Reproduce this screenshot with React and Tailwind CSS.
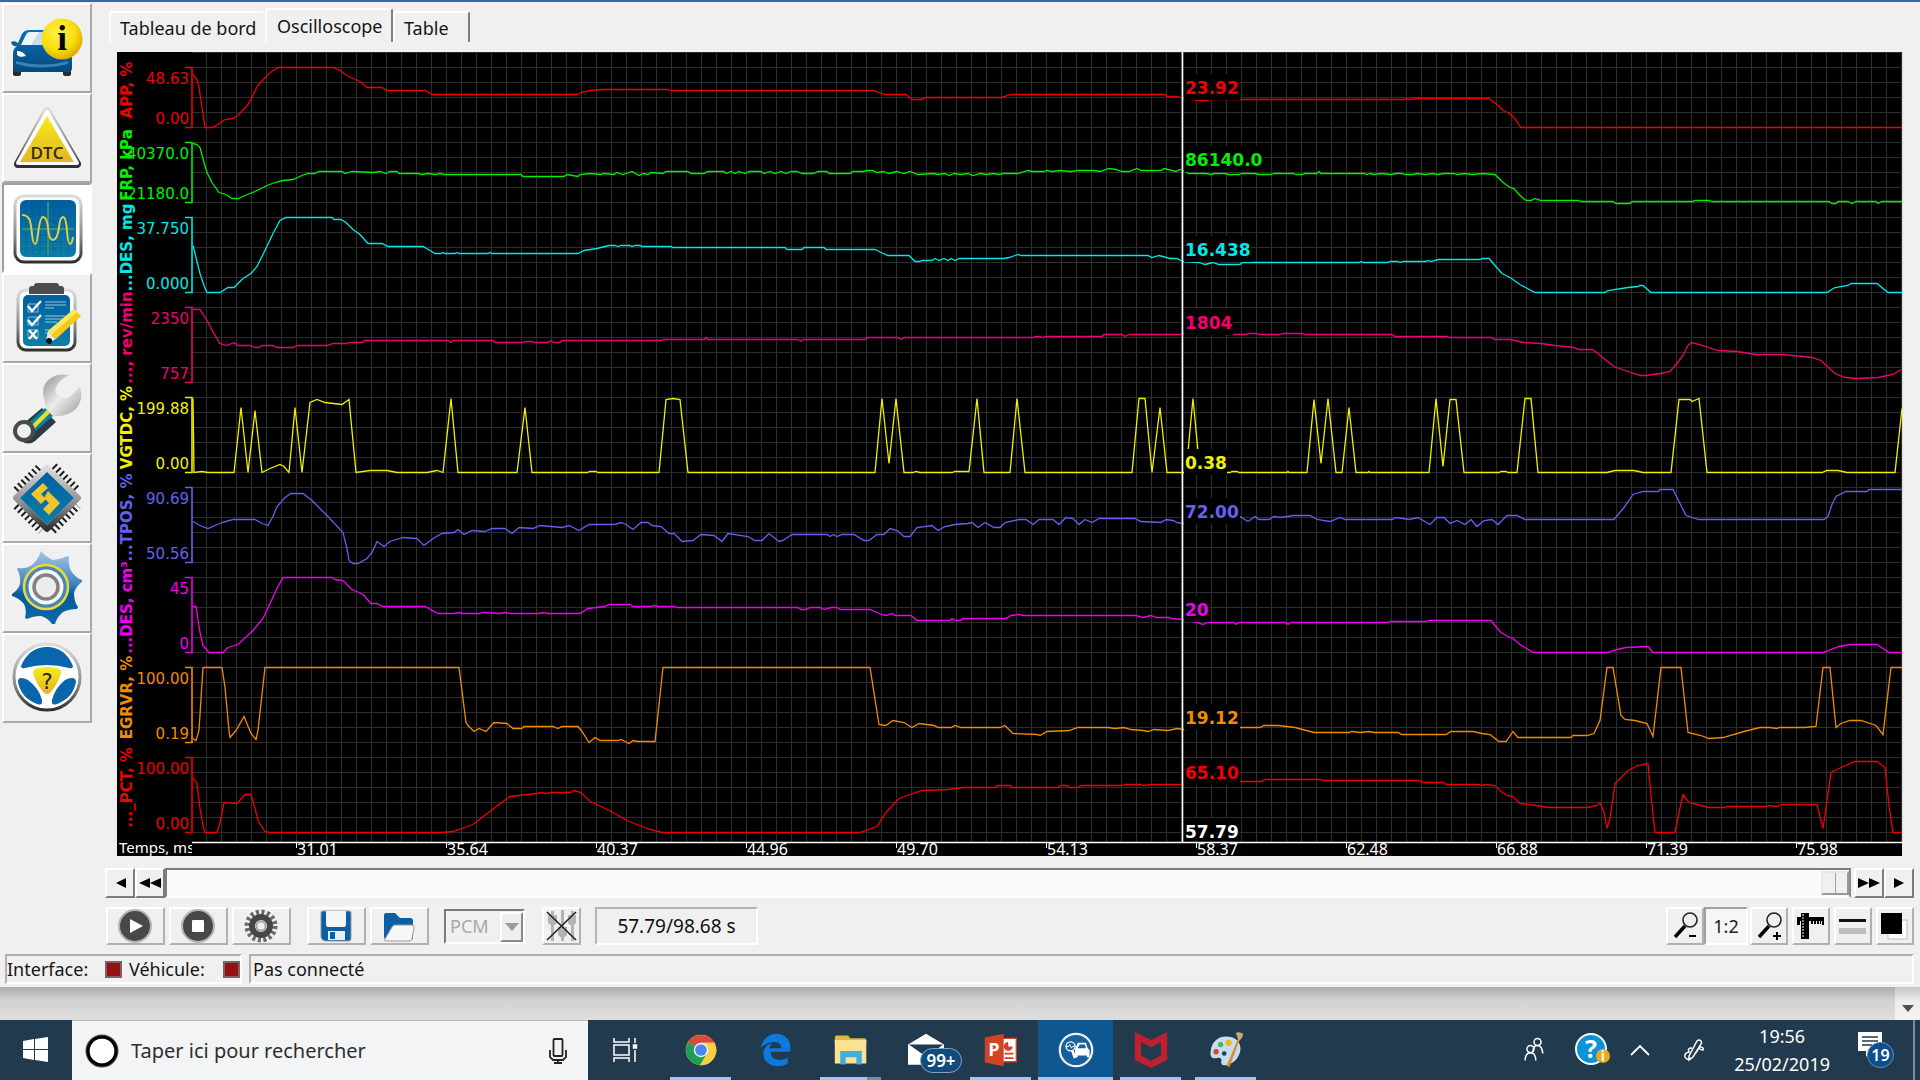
import React, { useState } from 'react';
import clsx from 'clsx';

const CHANNELS = [
  {
    name: 'APP, %', color: '#f00000', top: 67, bottom: 127, max: '48.63', min: '0.00', value: '23.92', valueY: 94, valueW: 56,
    points: '193,74 197,79 199,87 202,107 205,127 213,127 218,124 225,119 233,118 238,115 248,104 254,93 257,86 267,75 273,70 279,67 333,67 340,70 347,75 353,78 360,81 367,87 382,87 387,90 425,90 432,94 577,94 581,92 590,90 602,89 668,89 670,90 873,90 885,94 906,94 912,99 922,99 925,97 1001,97 1011,94 1165,94 1167,96 1177,96 1183,98 1201,100 1208,100 1210,99 1404,99 1406,98 1410,99 1416,98 1489,98 1497,104 1503,110 1508,112 1514,117 1521,127 1902,127',
  },
  {
    name: 'FRP, kPa', color: '#00f000', top: 142, bottom: 202, max: '40370.0', min: '21180.0', value: '86140.0', valueY: 166, valueW: 80,
    points: '193,143 197,144 200,147 204,162 207,172 212,182 219,192 226,194 232,198 238,198 245,195 255,191 267,185 275,182 283,180 293,179 302,175 308,173 315,173 319,171 342,171 345,173 352,171 373,172 380,171 386,173 390,171 397,171 399,173 418,173 422,174 428,173 436,174 440,173 444,174 521,174 523,176 564,176 567,174 578,176 580,174 590,173 601,174 603,173 614,174 617,172 623,174 632,171 639,175 643,173 648,174 651,172 663,173 666,171 688,171 691,173 704,173 708,171 724,171 726,173 731,171 735,173 739,171 745,173 749,171 761,171 764,173 770,171 775,173 781,171 786,173 791,171 797,171 802,173 813,173 818,171 827,171 829,173 850,173 853,171 863,171 867,170 872,170 878,172 883,171 889,173 897,171 904,173 910,171 918,174 934,173 938,174 945,173 949,175 954,173 961,174 968,173 973,175 980,173 987,174 993,173 999,174 1003,173 1018,173 1028,170 1032,171 1044,171 1047,170 1052,171 1060,170 1071,171 1077,170 1094,170 1100,171 1109,168 1116,169 1122,171 1129,171 1137,168 1141,170 1161,170 1164,168 1176,171 1180,169 1183,170 1189,173 1206,173 1211,174 1215,173 1225,173 1229,174 1239,174 1242,173 1255,173 1259,174 1271,174 1274,173 1293,173 1296,174 1302,174 1305,173 1317,173 1319,171 1321,173 1364,173 1367,174 1370,173 1374,174 1380,173 1391,174 1396,173 1402,173 1405,174 1413,174 1417,173 1425,174 1433,173 1437,174 1444,173 1454,173 1457,174 1465,173 1472,174 1482,173 1495,174 1503,182 1510,187 1514,188 1519,194 1526,200 1531,200 1535,198 1541,200 1579,200 1581,201 1613,201 1616,203 1630,203 1632,201 1693,201 1695,200 1709,200 1712,201 1829,201 1832,203 1836,203 1838,201 1848,201 1852,203 1856,201 1876,201 1878,203 1882,201 1902,201',
  },
  {
    name: '...DES, mg', color: '#00e8e8', top: 217, bottom: 292, max: '37.750', min: '0.000', value: '16.438', valueY: 256, valueW: 67,
    points: '193,245 200,273 204,285 207,292 220,292 228,287 234,287 243,278 251,273 257,266 264,252 273,233 280,220 286,217 332,217 334,219 341,219 346,222 353,229 360,234 368,243 382,243 388,246 423,246 430,250 435,253 441,253 443,252 445,253 455,253 457,252 459,253 488,253 490,252 492,253 578,253 584,250 597,248 609,245 615,245 618,246 621,245 630,245 632,246 635,245 640,245 642,246 671,246 673,247 785,247 787,249 802,249 804,247 824,247 826,249 875,249 881,252 888,255 909,255 915,261 920,261 922,260 932,260 935,258 939,260 944,258 948,260 951,258 955,260 959,258 1004,258 1009,257 1015,255 1018,254 1021,255 1148,255 1152,257 1159,255 1170,258 1177,258 1183,261 1199,262 1205,264 1213,262 1219,264 1240,264 1242,262 1359,262 1361,261 1363,262 1388,262 1390,261 1398,261 1400,262 1403,261 1426,261 1428,260 1431,261 1438,259 1480,259 1482,258 1489,258 1495,265 1502,273 1510,277 1520,284 1535,292 1605,292 1608,290 1628,287 1638,286 1640,285 1643,285 1651,292 1827,292 1835,287 1848,285 1851,283 1877,283 1888,292 1902,292',
  },
  {
    name: '..., rev/min', color: '#f00074', top: 307, bottom: 382, max: '2350', min: '757', value: '1804', valueY: 329, valueW: 49,
    points: '193,309 200,309 207,320 214,333 220,343 227,345 234,342 238,345 250,345 255,347 259,347 262,345 273,345 277,347 293,347 297,345 328,345 333,343 347,343 350,342 362,342 365,340 448,340 451,342 453,340 493,340 495,342 523,342 525,341 532,341 535,342 548,342 551,340 554,342 560,342 562,340 661,340 664,339 704,339 706,337 708,339 798,339 801,341 803,339 865,339 867,337 898,337 901,339 904,337 1033,337 1035,336 1040,336 1043,337 1046,336 1102,336 1104,334 1122,334 1125,336 1129,334 1180,334 1183,333 1233,334 1246,334 1248,333 1257,333 1259,334 1280,334 1283,333 1302,333 1305,334 1392,334 1395,336 1447,336 1449,337 1491,337 1495,339 1510,339 1524,342 1541,343 1555,345 1574,347 1579,349 1592,349 1598,353 1605,359 1614,366 1628,371 1640,375 1647,375 1652,374 1661,373 1670,371 1676,364 1683,355 1688,345 1692,342 1695,343 1706,346 1718,350 1737,351 1756,354 1784,354 1793,355 1812,357 1821,360 1835,373 1845,377 1857,378 1878,377 1893,374 1901,369',
  },
  {
    name: 'VGTDC, %', color: '#f0f000', top: 397, bottom: 472, max: '199.88', min: '0.00', value: '0.38', valueY: 469, valueW: 43,
    points: '193,398 194,472 202,471 208,472 234,472 241,407 248,472 255,410 262,472 270,468 280,464 284,466 289,472 295,407 302,472 310,402 317,399 325,402 342,404 349,399 356,472 370,470 387,470 397,472 427,472 437,470 443,472 451,398 458,472 517,472 525,407 532,472 587,472 590,471 596,471 598,472 659,472 666,399 673,398 680,399 688,472 875,472 882,398 889,463 896,398 904,472 913,472 916,471 920,472 952,472 955,471 969,471 977,398 984,472 1010,472 1017,398 1025,472 1132,472 1139,398 1145,398 1152,472 1160,407 1167,472 1186,472 1193,398 1200,472 1230,472 1232,471 1237,471 1239,472 1287,472 1288,471 1289,472 1307,472 1314,399 1321,463 1328,398 1336,472 1342,472 1349,407 1356,472 1368,472 1369,471 1370,472 1429,472 1436,398 1443,466 1450,399 1456,399 1464,472 1499,472 1501,471 1506,471 1508,472 1517,472 1525,398 1531,398 1538,472 1607,472 1615,470 1634,470 1643,472 1671,472 1679,399 1690,399 1692,401 1699,398 1707,472 1822,472 1827,470 1838,470 1847,472 1895,472 1902,408',
  },
  {
    name: '...TPOS, %', color: '#6262f0', top: 487, bottom: 562, max: '90.69', min: '50.56', value: '72.00', valueY: 518, valueW: 56,
    points: '193,521 200,525 208,528 222,522 233,519 255,519 262,523 268,525 273,516 277,506 285,497 291,493 303,493 312,500 328,516 343,532 347,548 349,560 353,563 358,563 367,558 372,552 377,541 384,546 390,541 403,537 417,538 424,545 433,538 442,533 454,532 458,529 464,534 472,530 485,531 492,528 505,528 512,533 519,527 533,528 540,525 562,527 569,525 579,530 589,524 614,524 621,522 626,524 633,529 641,522 648,522 652,525 661,526 669,533 674,533 682,541 693,540 701,534 714,535 722,541 728,533 748,536 755,540 762,540 769,533 779,541 783,540 792,534 827,534 830,536 833,534 837,536 842,534 854,534 864,540 869,540 877,534 884,534 890,528 897,530 904,536 910,536 917,527 932,525 938,530 945,526 955,524 968,523 972,522 978,527 985,522 994,527 1000,527 1005,522 1019,519 1026,519 1033,524 1039,519 1053,519 1059,524 1066,517 1073,518 1079,524 1085,519 1092,522 1099,518 1135,518 1141,521 1161,522 1166,519 1173,520 1177,522 1183,523 1240,516 1248,521 1255,516 1259,519 1269,519 1274,516 1281,517 1293,515 1310,515 1317,519 1330,521 1340,517 1345,519 1392,519 1396,517 1409,519 1418,517 1430,524 1437,517 1444,517 1450,523 1457,520 1465,524 1471,519 1477,526 1484,520 1492,519 1498,524 1507,515 1517,515 1525,519 1614,519 1624,507 1633,494 1643,491 1658,491 1660,489 1673,489 1680,503 1686,515 1699,519 1824,519 1828,516 1832,504 1836,496 1846,491 1867,491 1869,489 1902,489',
  },
  {
    name: '...DES, cm³', color: '#f000f0', top: 577, bottom: 652, max: '45', min: '0', value: '20', valueY: 616, valueW: 25,
    points: '193,606 196,606 200,632 203,645 209,652 223,652 228,647 238,644 253,630 263,618 271,601 277,588 283,577 332,577 335,579 343,580 352,589 363,594 371,603 377,603 383,606 425,606 438,613 454,613 459,612 463,613 480,613 483,612 500,613 505,612 511,613 539,613 544,612 547,613 580,613 588,608 605,606 609,604 630,604 633,606 651,606 654,605 658,606 674,606 677,607 798,607 801,609 806,609 810,607 820,607 824,609 831,607 837,607 840,609 870,609 881,614 886,615 892,613 895,615 911,615 917,620 950,620 952,618 956,620 961,620 963,618 1006,618 1011,615 1019,614 1023,615 1136,615 1143,617 1151,615 1156,617 1169,617 1172,618 1183,619 1197,622 1203,624 1208,622 1234,622 1236,624 1239,622 1286,622 1288,624 1291,622 1388,622 1390,621 1426,621 1429,620 1491,620 1495,625 1501,632 1508,636 1513,638 1520,644 1533,652 1607,652 1617,649 1626,647 1648,646 1653,652 1823,652 1839,646 1850,644 1877,644 1889,652 1902,652',
  },
  {
    name: 'EGRVR, %', color: '#f08c00', top: 667, bottom: 742, max: '100.00', min: '0.19', value: '19.12', valueY: 724, valueW: 56,
    points: '193,738 196,740 199,730 203,667 222,667 225,687 229,730 230,737 236,730 244,716 251,733 256,739 258,730 265,667 459,667 466,722 468,725 474,731 479,728 486,731 494,722 507,723 513,728 522,728 524,726 553,726 558,728 562,726 578,726 582,731 589,742 595,737 600,740 618,740 621,739 629,743 633,740 638,741 655,741 663,667 870,667 879,724 886,725 893,720 904,722 912,727 919,723 934,725 938,727 951,727 955,725 961,727 1000,727 1005,725 1013,733 1037,734 1040,735 1047,731 1069,730 1078,727 1108,727 1115,728 1124,727 1131,729 1143,730 1148,731 1154,729 1168,730 1177,728 1183,729 1240,727 1260,727 1264,725 1278,725 1295,727 1314,732 1349,732 1352,731 1360,732 1369,731 1374,732 1398,732 1402,734 1446,734 1451,731 1473,731 1482,733 1490,734 1499,741 1506,741 1513,731 1518,737 1571,737 1573,735 1587,735 1594,733 1600,720 1607,667 1613,667 1621,715 1625,719 1635,720 1647,723 1653,736 1661,667 1681,667 1688,732 1701,735 1709,738 1723,737 1744,731 1760,727 1770,727 1777,728 1779,727 1805,727 1816,726 1823,667 1830,667 1836,727 1841,723 1850,720 1861,720 1876,725 1883,734 1891,667 1902,667',
  },
  {
    name: '..._PCT, %', color: '#f00000', top: 757, bottom: 832, max: '100.00', min: '0.00', value: '65.10', valueY: 779, valueW: 56,
    points: '193,777 197,783 200,808 203,825 205,832 217,832 220,822 224,802 237,803 245,794 251,794 255,808 258,820 265,831 269,832 441,832 453,831 473,824 491,810 510,796 537,793 541,792 546,793 553,792 571,792 574,790 581,792 589,800 613,812 627,820 647,828 662,832 860,832 877,826 886,812 899,798 922,790 948,789 964,787 996,787 998,785 1010,785 1012,787 1058,787 1061,785 1067,785 1070,787 1078,787 1081,785 1122,785 1125,784 1141,784 1143,785 1152,784 1183,784 1240,781 1262,781 1265,779 1321,779 1323,780 1420,780 1422,782 1443,782 1447,784 1478,784 1482,785 1486,784 1495,785 1501,791 1507,795 1513,796 1520,803 1536,805 1548,807 1588,807 1597,805 1600,802 1604,812 1607,828 1610,818 1615,783 1628,770 1638,765 1648,763 1651,795 1655,832 1675,832 1679,812 1683,794 1689,802 1701,805 1709,807 1725,807 1727,806 1766,806 1769,805 1777,806 1782,804 1817,804 1823,828 1831,772 1841,767 1855,761 1877,761 1885,767 1889,805 1893,832 1902,832',
  },
];

const TIME_TICKS = ['31.01', '35.64', '40.37', '44.96', '49.70', '54.13', '58.37', '62.48', '66.88', '71.39', '75.98'];

const range = (n) => [...Array(n).keys()];

const Scope = () => (
  <svg viewBox="117 52 1785 804" className="block w-full h-auto bg-black overflow-visible" role="img" aria-label="Oscilloscope">
    {/* Grid */}
    <g stroke="#2d2d2d" strokeWidth="1.2">
      {range(53).map((i) => <line key={i} x1="192" x2="1902" y1={52.5 + i * 15} y2={52.5 + i * 15} />)}
      {range(114).map((i) => <line key={i} x1={206.5 + i * 15} x2={206.5 + i * 15} y1="52" y2="842" />)}
    </g>

    {/* Channels */}
    {CHANNELS.map((ch) => (
      <g key={ch.name}>
        <g fill={ch.color} textAnchor="end" className="font-['DejaVu_Sans'] text-[15px]">
          <text x="189" y={ch.top + 17}>{ch.max}</text>
          <text x="189" y={ch.bottom - 3}>{ch.min}</text>
        </g>
        <text
          transform={`translate(132 ${(ch.top + ch.bottom) / 2 - 7}) rotate(-90)`}
          textAnchor="middle"
          fill={ch.color}
          className="font-['DejaVu_Sans'] font-bold text-[15px]"
        >
          {ch.name}
        </text>
        <path d={`M185 ${ch.top + 0.5}H192V${ch.bottom + 0.5}H185`} fill="none" stroke={ch.color} strokeWidth="1.6" />
        <polyline points={ch.points} transform="translate(0 0.5)" fill="none" stroke={ch.color} strokeWidth="1.3" />
      </g>
    ))}

    {/* Cursor with the values under it */}
    <line x1="1182.5" x2="1182.5" y1="52" y2="842" stroke="#fff" strokeWidth="1.6" />
    {CHANNELS.map((ch) => (
      <g key={ch.name}>
        <rect x="1184" y={ch.valueY - 20} width={ch.valueW} height="26" fill="#000" />
        <text x="1185" y={ch.valueY} fill={ch.color} className="font-['DejaVu_Sans'] font-bold text-[17px]">{ch.value}</text>
      </g>
    ))}
    <rect x="1184" y="818" width="56" height="23" fill="#000" />
    <text x="1185" y="838" fill="#fff" className="font-['DejaVu_Sans'] font-bold text-[17px]">57.79</text>

    {/* Time axis */}
    <line x1="192" x2="1902" y1="842.5" y2="842.5" stroke="#fff" strokeWidth="1.6" />
    <g fill="#fff" className="font-['Noto_Sans'] text-[16px]">
      {TIME_TICKS.map((t, i) => (
        <g key={t}>
          <line x1={296.5 + i * 150} x2={296.5 + i * 150} y1="842" y2="848" stroke="#fff" />
          <text x={297 + i * 150} y="855">{t}</text>
        </g>
      ))}
    </g>
    <text x="119" y="853" fill="#fff" className="font-['Noto_Sans'] text-[15px]">Temps, ms</text>
    <rect x="192" y="844" width="14" height="12" fill="#000" />
  </svg>
);

/* ---------- Sidebar icons ---------- */

const Defs = () => (
  <svg width="0" height="0" className="absolute" aria-hidden="true">
    <defs>
      <linearGradient id="blue" x1="0" y1="0" x2="0" y2="1">
        <stop offset="0" stopColor="#005f9f" />
        <stop offset="1" stopColor="#0c7fa8" />
      </linearGradient>
      <linearGradient id="carBlue" x1="0" y1="0" x2="0" y2="1">
        <stop offset="0" stopColor="#0a6fb4" />
        <stop offset="1" stopColor="#044a80" />
      </linearGradient>
      <linearGradient id="gearBlue" x1="0" y1="0" x2="0" y2="1">
        <stop offset="0" stopColor="#a9c6e2" />
        <stop offset="0.45" stopColor="#3e86be" />
        <stop offset="0.6" stopColor="#06599c" />
        <stop offset="1" stopColor="#0a6bae" />
      </linearGradient>
      <linearGradient id="yellow" x1="0" y1="0" x2="0" y2="1">
        <stop offset="0" stopColor="#f6ec1c" />
        <stop offset="1" stopColor="#e3b523" />
      </linearGradient>
      <radialGradient id="badge" cx="0.4" cy="0.35" r="0.7">
        <stop offset="0" stopColor="#fff04a" />
        <stop offset="0.6" stopColor="#fbdc10" />
        <stop offset="1" stopColor="#dba400" />
      </radialGradient>
      <linearGradient id="rim" x1="0" y1="0" x2="0" y2="1">
        <stop offset="0" stopColor="#dcdcdc" />
        <stop offset="0.6" stopColor="#8b8b8b" />
        <stop offset="1" stopColor="#2f2f2f" />
      </linearGradient>
      <linearGradient id="metal" x1="0" y1="0" x2="1" y2="1">
        <stop offset="0" stopColor="#8c8c8c" />
        <stop offset="0.5" stopColor="#ececec" />
        <stop offset="1" stopColor="#9a9a9a" />
      </linearGradient>
    </defs>
  </svg>
);

const CarInfo = () => (
  <>
    <path d="M9 60h8v9q0 2-2 2h-4q-2 0-2-2zM59 60h8v9q0 2-2 2h-4q-2 0-2-2z" fill="#2a2a2a" />
    <path d="M7 37q4-2 7 1l3-7q2-6 8-6h26q6 0 9 6l6 14q2 4 2 9v9q0 4-4 4H13q-4 0-4-4V48q0-4 4-7-5 1-6-4z" fill="url(#carBlue)" />
    <path d="M17 40l5-10q1-3 5-3h22l4 13z" fill="#c9dcec" />
    <path d="M17 40l5-10q1-3 5-3h8l-8 13z" fill="#eef5fb" />
    <path d="M13 46q6 0 9 5-7 2-9-1z" fill="#fff" />
    <path d="M12 56q28 7 52 0v3q-28 7-52 0z" fill="#5aa3d4" opacity="0.6" />
    <circle cx="58" cy="34" r="20.5" fill="url(#badge)" />
    <text x="58" y="45" textAnchor="middle" className="font-['Liberation_Serif'] font-bold text-[35px]">i</text>
  </>
);

const Dtc = () => (
  <>
    <path d="M43 16L73 69H14z" fill="#fff" stroke="url(#rim)" strokeWidth="8" strokeLinejoin="round" />
    <path d="M43 17L73 68H14z" fill="#fff" stroke="#fff" strokeWidth="4" strokeLinejoin="round" />
    <path d="M43 21L70 67H16z" fill="url(#yellow)" />
    <text x="43" y="64" textAnchor="middle" fill="#2e2a10" className="font-['Open_Sans'] font-semibold text-[17px]">DTC</text>
  </>
);

const ScopeIcon = () => (
  <>
    <rect x="11" y="11" width="66" height="66" rx="9" fill="#fff" stroke="url(#rim)" strokeWidth="3" />
    <rect x="16" y="15" width="56" height="57" rx="6" fill="url(#blue)" />
    <g stroke="#0a4f86" strokeWidth="1" strokeDasharray="1 2">
      {range(7).map((i) => <path key={i} d={`M${22 + i * 7} 17V70M18 ${22 + i * 7}H70`} />)}
    </g>
    <path d="M44 17V70M18 44H70" stroke="#3d8f7a" strokeWidth="2" />
    <path d="M18 30q6 0 8 6 1 4 2 13 1 10 3 10t3-10q2-17 5-17 4 0 5 11 1 12 5 12 4 0 6-12 1-11 4-11t4 14q1 13 3 13t3-7" fill="none" stroke="#dccf4a" strokeWidth="2" />
  </>
);

const Checklist = () => (
  <>
    <rect x="14" y="15" width="57" height="60" rx="8" fill="#fff" stroke="url(#rim)" strokeWidth="3" />
    <rect x="19" y="20" width="47" height="51" rx="5" fill="url(#blue)" />
    <path d="M25 14q0-3 3-3h2q0-3 3-3h19q3 0 3 3h2q3 0 3 3v5H25z" fill="#4c4c4c" />
    <g fill="none" stroke="#8fb8cf" strokeWidth="1"><path d="M24 29h10v8H24zM24 42h10v8H24zM24 55h10v8H24z" /></g>
    <path d="M24 31l4 5 9-10M24 45l4 5 9-10M25 55l8 9M33 55l-8 9" fill="none" stroke="#fff" strokeWidth="2.4" />
    <path d="M41 27h21M41 30h21M41 33h9M41 41h20M41 44h18M41 47h12M41 55h8M41 58h6" stroke="#9cc3dc" strokeWidth="1.2" />
    <path d="M70 34l7 7-25 23-8-8z" fill="#f5c918" />
    <path d="M70 34l3 3-26 23-3-4z" fill="#fbe763" />
    <path d="M44 56l8 8-9 5-1-4z" fill="#e8e4dc" />
    <circle cx="45" cy="66" r="3" fill="#111" />
  </>
);

const Wrench = () => (
  <>
    <path d="M38 43L52 57 31 76q-6 5-14 0-6-6-3-13z" fill="#2b3c44" />
    <path d="M41 43L49 51 27 70l-8-7z" fill="#0b7fa0" />
    <path d="M44 44l3 3-19 19-3-3z" fill="#e6e02a" />
    <path d="M65 10q-16-3-24 9-4 8 0 18-1 4 4 9l5 5q13 1 22-7 8-10 4-22L64 33q-8 1-12-5-3-9 13-18z" fill="url(#metal)" />
    <circle cx="20" cy="66" r="9" fill="#f0f0f0" stroke="#4a4a4a" strokeWidth="4" />
  </>
);

const Chip = () => (
  <>
    <g stroke="#1d1d1d" strokeWidth="7" strokeDasharray="2 3">
      <path d="M12 35L36 11M50 11L74 35M12 51L37 76M49 76L74 51" />
    </g>
    <path d="M43 13L74 43 43 74 12 43z" fill="#f4f4f4" stroke="url(#rim)" strokeWidth="6" strokeLinejoin="round" />
    <path d="M43 17L70 43 43 70 16 43z" fill="url(#blue)" />
    <path d="M39 28l5 5-7 6 5 5-5 5-10-10zM44 36l12 12-11 12-6-6 6-6-5-5z" fill="#f0c62c" />
  </>
);

const Gear = () => (
  <>
    <path d="M37 6q5 6 12 9 8-1 15-4l1 1q-1 7 2 14 5 7 11 9v2q-6 4-8 11 0 9 4 14l-1 2q-8 0-14 3-6 5-8 12h-3q-4-6-11-8-8 0-14 3l-2-1q2-8-1-14-5-6-12-8v-2q6-4 8-10 1-8-3-15l1-1q8 1 14-3 6-5 9-14z" fill="url(#gearBlue)" />
    <circle cx="42" cy="42" r="22" fill="#4b86ae" stroke="#ecd93c" strokeWidth="2.5" />
    <circle cx="42" cy="42" r="17.5" fill="#f6f6f6" />
    <circle cx="42" cy="42" r="12" fill="#ececec" stroke="#848084" strokeWidth="3.5" />
  </>
);

const Wheel = () => (
  <>
    <circle cx="43" cy="42" r="33" fill="#fff" stroke="url(#rim)" strokeWidth="3" />
    <circle cx="43" cy="42" r="30" fill="#fff" />
    <path d="M17 31q8-19 26-19t26 19q0 3-4 2-22-6-44 0-4 1-4-2z" fill="#0a66ac" />
    <path d="M17 43q-3 0-3 4 3 16 19 22 6 2 5-4-3-12-14-20-3-2-7-2zM68 43q4 0 4 4-3 16-19 22-6 2-5-4 3-12 13-20 3-2 7-2z" fill="#0a66ac" />
    <path d="M31 34q12-4 24 0 3 1 2 4-3 11-11 20-3 2-6 0-8-9-11-20 0-3 2-4z" fill="url(#yellow)" />
    <text x="43" y="54" textAnchor="middle" fill="#222" className="font-['DejaVu_Sans'] text-[21px]">?</text>
  </>
);

const SIDEBAR = [
  { label: 'Informations véhicule', icon: CarInfo },
  { label: 'Codes défaut', icon: Dtc },
  { label: 'Paramètres', icon: ScopeIcon, active: true },
  { label: 'Tests', icon: Checklist },
  { label: 'Maintenance', icon: Wrench },
  { label: 'Calculateur', icon: Chip },
  { label: 'Réglages', icon: Gear },
  { label: 'Aide', icon: Wheel },
];

// eslint-disable-next-line no-unused-vars
const SidebarButton = ({ label, icon: Icon, active }) => (
  <button
    aria-label={label}
    className={clsx(
      'block w-[90px] h-[90px] border-2',
      active ? 'bg-white border-t-[#a0a0a0] border-l-[#a0a0a0] border-r-white border-b-white' : 'bg-[#f0f0f0] border-t-white border-l-white border-r-[#a8a8a8] border-b-[#a8a8a8]'
    )}
  >
    <svg viewBox="0 0 86 86" className="w-full h-full"><Icon /></svg>
  </button>
);

/* ---------- Toolbar ---------- */

const ToolButton = ({ label, className, children }) => (
  <button
    aria-label={label}
    className={clsx('h-[38px] flex items-center justify-center bg-[#f0f0f0] border-2 border-t-white border-l-white border-r-[#b0b0b0] border-b-[#b0b0b0]', className)}
  >
    {children}
  </button>
);

const ScrollButton = ({ label, children }) => (
  <button
    aria-label={label}
    className="w-[30px] h-[30px] flex items-center justify-center bg-[#f0f0f0] border-2 border-t-white border-l-white border-r-[#7c7c7c] border-b-[#7c7c7c]"
  >
    <svg width="22" height="12" viewBox="0 0 22 12">{children}</svg>
  </button>
);

const Toolbar = () => (
  <div className="flex items-center pl-[14px] pr-[6px] mt-[9px]">
    <div className="flex gap-1">
      <ToolButton label="Démarrer" className="w-[59px]">
        <svg width="38" height="34" viewBox="0 0 38 34">
          <circle cx="18" cy="17" r="16" fill="#484848" stroke="#b5b5b5" strokeWidth="2" />
          <path d="M13 10l13 7-13 7z" fill="#fff" />
        </svg>
      </ToolButton>
      <ToolButton label="Arrêter" className="w-[59px]">
        <svg width="38" height="34" viewBox="0 0 38 34">
          <circle cx="18" cy="17" r="16" fill="#484848" stroke="#b5b5b5" strokeWidth="2" />
          <rect x="12" y="11" width="12" height="12" rx="1" fill="#fff" />
        </svg>
      </ToolButton>
      <ToolButton label="Configuration" className="w-[59px]">
        <svg width="38" height="34" viewBox="0 0 38 34">
          <circle cx="18" cy="17" r="14" fill="none" stroke="#6a6a6a" strokeWidth="5" strokeDasharray="3 2.5" />
          <circle cx="18" cy="17" r="9" fill="#ddd" stroke="#464646" strokeWidth="6" />
          <circle cx="18" cy="17" r="4.5" fill="#eee" stroke="#aaa" strokeWidth="2" />
        </svg>
      </ToolButton>
    </div>
    <div className="flex gap-1 ml-4">
      <ToolButton label="Enregistrer" className="w-[59px]">
        <svg width="38" height="34" viewBox="0 0 38 34">
          <path d="M3 4q0-2 2-2h26q2 0 2 2v25q0 3-2 3H7q-4-1-4-4z" fill="#0a5fa5" stroke="#999" />
          <path d="M8 2h20v14q0 2-2 2H10q-2 0-2-2z" fill="#f5f5f5" />
          <path d="M10 22h17v9H10z" fill="#e8edf2" />
          <path d="M12 23h5v7h-5z" fill="#0a5fa5" />
        </svg>
      </ToolButton>
      <ToolButton label="Ouvrir" className="w-[59px]">
        <svg width="38" height="34" viewBox="0 0 38 34">
          <path d="M3 6q0-2 2-2h9l5 5h10q3 0 3 3v18H5q-2 0-2-2z" fill="#0a5fa5" />
          <path d="M11 18q1-2 3-2h17q3 0 2 3l-2 11q0 2-3 2H4q-1 0 0-2z" fill="#f7f7f7" stroke="#999" />
        </svg>
      </ToolButton>
    </div>
    <label className="relative ml-[15px]">
      <span className="sr-only">Module</span>
      <select disabled className="appearance-none block w-[81px] h-[35px] pl-[4px] bg-[#f0f0f0] border-2 border-t-[#7a7a7a] border-l-[#7a7a7a] border-r-white border-b-white text-[18px] text-[#a8a8a8] opacity-100">
        <option>PCM</option>
      </select>
      <span className="absolute right-[2px] top-[3px] w-[23px] h-[30px] flex items-center justify-center bg-[#f0f0f0] border-2 border-t-white border-l-white border-r-[#8a8a8a] border-b-[#8a8a8a] pointer-events-none">
        <svg width="14" height="8" viewBox="0 0 14 8"><path d="M0 0h14L7 8z" fill="#9a9a9a" /></svg>
      </span>
    </label>
    <ToolButton label="Filtre" className="w-[39px] ml-[17px]">
      <svg width="34" height="34" viewBox="0 0 34 34">
        <g fill="#b4b4b4">
          <path d="M6 2h3v30H6zM3 6h9v8q-4 5-9 0zM16 1h3v31h-3zM13 18h9v8q-4 5-9 0zM26 2h3v30h-3zM23 6h8v8q-4 5-8 0z" />
        </g>
        <path d="M2 3L31 31M31 3L2 31" stroke="#222" strokeWidth="1.6" />
      </svg>
    </ToolButton>
    <output className="w-[163px] h-[38px] ml-[14px] flex items-center justify-center border-2 border-t-[#b4b4b4] border-l-[#b4b4b4] border-r-white border-b-white text-[19px] text-[#111]">
      57.79/98.68 s
    </output>

    <div className="flex items-center gap-1 ml-auto">
      <div className="flex items-center">
        <ToolButton label="Zoom arrière" className="w-[38px]">
          <svg width="34" height="34" viewBox="0 0 34 34">
            <circle cx="22" cy="11" r="7" fill="none" stroke="#222" strokeWidth="1.6" />
            <path d="M17 17L7 28" stroke="#000" strokeWidth="3.5" />
            <path d="M21 27h7" stroke="#000" strokeWidth="2" />
          </svg>
        </ToolButton>
        <button className="w-[44px] h-[38px] bg-[#f6f6f6] border-2 border-t-[#a0a0a0] border-l-[#a0a0a0] border-r-white border-b-white text-[18px] leading-none text-[#222]">1:2</button>
        <ToolButton label="Zoom avant" className="w-[38px] ml-0.5">
          <svg width="34" height="34" viewBox="0 0 34 34">
            <circle cx="22" cy="11" r="7" fill="none" stroke="#222" strokeWidth="1.6" />
            <path d="M17 17L7 28" stroke="#000" strokeWidth="3.5" />
            <path d="M21 27h8M25 23v8" stroke="#000" strokeWidth="2" />
          </svg>
        </ToolButton>
      </div>
      <ToolButton label="Échelles" className="w-[38px]">
        <svg width="34" height="34" viewBox="0 0 34 34">
          <path d="M7 4h8v26H7zM3 8h27v4H3z" fill="#000" />
          <path d="M3 8h3v8H3zM17 9h2v6h-2zM20 9h2v6h-2zM23 9h2v6h-2zM26 9h1v6h-1zM28 8h2v8h-2z" fill="#000" />
          <path d="M8 6h2M8 9h2M8 12h2M8 15h2M8 18h2M8 21h2M8 24h2M8 27h2" stroke="#fff" />
        </svg>
      </ToolButton>
      <ToolButton label="Épaisseur" className="w-[38px]">
        <svg width="34" height="34" viewBox="0 0 34 34">
          <path d="M3 10h27v3H3z" fill="#111" />
          <path d="M3 19h27v6H3z" fill="#bdbdbd" />
        </svg>
      </ToolButton>
      <ToolButton label="Couleur de fond" className="w-[38px]">
        <svg width="34" height="34" viewBox="0 0 34 34">
          <rect x="10" y="11" width="19" height="19" fill="#fff" stroke="#bbb" />
          <rect x="3" y="4" width="21" height="21" fill="#000" />
        </svg>
      </ToolButton>
    </div>
  </div>
);

const Led = () => <span className="w-[17px] h-[17px] bg-[#941013] border-2 border-[#7b6264]" />;

/* ---------- Taskbar ---------- */

const CHROME = (
  <>
    <circle cx="20" cy="20" r="17" fill="#f7c948" />
    <path d="M20 20L5.500 11.500A17 17 0 0 1 35 12H20z" fill="#d9493c" />
    <path d="M20 20l-14.500-8.500A17 17 0 0 0 19 37l8-13z" fill="#1f9d57" />
    <path d="M20 12h15A17 17 0 0 1 19 37l8-14z" fill="#f9ce45" />
    <circle cx="20" cy="20" r="8" fill="#fff" />
    <circle cx="20" cy="20" r="6.500" fill="#4a86f0" />
  </>
);

const EDGE = (
  <path d="M3 18C5 8 12 2 20 2c10 0 16 7 16 15v5H14c0 6 4 9 10 9 4 0 7-1 9-3v7c-3 2-7 3-11 3C12 38 6 32 6 24c0-6 4-10 10-12-2 2-3 4-3 6h13c0-4-3-7-8-7-6 0-11 2-15 7z" fill="#0a7ade" />
);

const EXPLORER = (
  <>
    <path d="M2 6q0-2 2-2h12q2 0 3 3h16q2 0 2 2v5H2z" fill="#e0b93c" />
    <path d="M2 9h35v26H2z" fill="#fbe291" />
    <path d="M8 36V21h24v15h-6v-8H14v8z" fill="#41aee0" />
  </>
);

const MAIL = (
  <>
    <path d="M0 14L20 2l20 12v22H0z" fill="#fff" />
    <path d="M1 14h38L21 28z" fill="#1f3a4f" />
    <path d="M0 15l20 14 20-14v21H0z" fill="#fff" />
  </>
);

const POWERPOINT = (
  <>
    <path d="M20 7h17v26H20z" fill="#fff" stroke="#d04424" strokeWidth="1.500" />
    <path d="M28 11a5 5 0 1 0 5 5h-5zM24 23h10v2H24zM24 28h10v2H24z" fill="#d04424" />
    <path d="M2 6l21-4v36L2 34z" fill="#d04424" />
    <text x="12" y="27" textAnchor="middle" fill="#fff" className="font-['Open_Sans'] font-bold text-[20px]">P</text>
  </>
);

const DIAG = (
  <>
    <circle cx="20" cy="20" r="18" fill="#17629e" stroke="#f0f0f0" strokeWidth="2.500" />
    <path d="M19 19l3-7h9l2 6 2 2v8h-3v-2H22v2h-3z" fill="#fff" />
    <path d="M22 18l2-4h6l1 4z" fill="#17629e" />
    <circle cx="14" cy="16" r="5" fill="#17629e" stroke="#fff" strokeWidth="1.500" />
    <path d="M16 21l3 8" stroke="#fff" strokeWidth="3" />
    <path d="M9 16h3l1-2 2 4 1-2h2" stroke="#fff" fill="none" />
  </>
);

const MCAFEE = <path d="M2 0l18 9 18-9v31l-18 9-18-9zM9 11v15l11 6 11-6V11l-11 6z" fill="#bd2130" fillRule="evenodd" />;

const PAINT = (
  <>
    <path d="M20 5c11 0 17 7 16 15-1 9-9 17-18 17-3 0-4-2-3-5 0-3-2-4-5-3-6 1-8-2-7-8C4 12 10 5 20 5z" fill="#c4def0" />
    <circle cx="9" cy="22" r="3" fill="#d8413a" />
    <circle cx="14" cy="14" r="3" fill="#4fb34b" />
    <circle cx="23" cy="12" r="3.500" fill="#f0b429" />
    <circle cx="18" cy="24" r="2.500" fill="#1f3a4f" />
    <path d="M33 8l2 1-11 30q-3 0-3-2z" fill="#e08a2e" />
    <path d="M31 1q4-2 8 1 0 5-5 8z" fill="#c9a878" />
  </>
);

const TASKS = [
  { label: 'Google Chrome', icon: CHROME, running: true },
  { label: 'Microsoft Edge', icon: EDGE },
  { label: 'Explorateur de fichiers', icon: EXPLORER, running: true, stacked: true },
  { label: 'Courrier', icon: MAIL, badge: '99+' },
  { label: 'PowerPoint', icon: POWERPOINT, running: true },
  { label: 'Diagnostic', icon: DIAG, running: true, active: true },
  { label: 'McAfee', icon: MCAFEE, running: true },
  { label: 'Paint', icon: PAINT, running: true },
];

const Taskbar = () => (
  <footer className="flex h-[60px] bg-[#213a4e] text-white">
    <button aria-label="Démarrer" className="w-[72px] flex items-center justify-center">
      <svg width="26" height="26" viewBox="0 0 26 26" fill="#fff">
        <path d="M0 4l11-2v10H0zM12 2l13-2v12H12zM0 13h11v10L0 21zM12 13h13v12l-13-2z" />
      </svg>
    </button>
    <label className="w-[516px] flex items-center pl-[13px] pr-5 bg-[#f3f4f6] border-t border-[#b8b8b8]">
      <svg width="34" height="34" viewBox="0 0 34 34">
        <circle cx="17" cy="17" r="14.500" fill="#fff" stroke="#555" strokeWidth="4" />
        <circle cx="17" cy="17" r="14" fill="none" stroke="#000" strokeWidth="3" />
      </svg>
      <input type="search" placeholder="Taper ici pour rechercher" className="flex-1 min-w-0 ml-3 bg-transparent outline-none text-[20px] text-[#222] placeholder:text-[#2e2e2e]" />
      <svg width="20" height="28" viewBox="0 0 20 28" fill="none" stroke="#222" strokeWidth="1.800">
        <rect x="5.500" y="2" width="9" height="17" rx="1" />
        <path d="M2 13v7l3 3h10l3-3v-7M10 23v3M6 26h8" />
      </svg>
    </label>
    <button aria-label="Affichage des tâches" className="w-[75px] flex items-center justify-center">
      <svg width="26" height="26" viewBox="0 0 26 26" fill="none" stroke="#fff" strokeWidth="1.500">
        <path d="M1 1v4h15V1M1 25v-4h15v4M1 8h15v10H1zM22 1v5M22 13v12" />
        <path d="M20.500 8h3v3h-3z" fill="#fff" />
      </svg>
    </button>
    {TASKS.map((task) => (
      <button
        key={task.label}
        aria-label={task.label}
        className={clsx('relative w-[75px] flex flex-col items-center', task.active && 'bg-[#0f5790]')}
      >
        <svg width="36" height="36" viewBox="0 0 40 40" className="mt-[12px]">{task.icon}</svg>
        {task.badge && (
          <span className="absolute left-8 top-7 w-[42px] h-[25px] rounded-full border border-[#7fa6c8] bg-[#134a7c] text-[17px] leading-[23px] text-center font-semibold">{task.badge}</span>
        )}
        {task.running && (
          <span className={clsx('mt-auto h-[3px] flex justify-end bg-[#9cc8ee]', task.active ? 'w-full' : 'w-[61px]')}>
            {task.stacked && <span className="w-[14px] bg-[#7190a8]" />}
          </span>
        )}
      </button>
    ))}
    <div className="flex items-center ml-auto">
      <svg width="24" height="30" viewBox="0 0 24 34" fill="none" stroke="#fff" strokeWidth="1.700" className="mr-[29px]">
        <circle cx="16" cy="8" r="4" />
        <circle cx="8" cy="16" r="4" />
        <path d="M11 19q0-7 5-7t6 9M2 29q0-9 6-9t6 9" />
      </svg>
      <svg width="36" height="34" viewBox="0 0 36 34" className="mr-[19px]">
        <circle cx="16" cy="16" r="15" fill="#0a93d6" stroke="#fff" strokeWidth="2" />
        <text x="16" y="25" textAnchor="middle" fill="#fff" className="font-['Open_Sans'] font-bold text-[25px]">?</text>
        <circle cx="28" cy="23" r="7" fill="#e9a820" />
        <text x="28" y="28" textAnchor="middle" fill="#fff" className="font-['Open_Sans'] font-bold text-[14px]">i</text>
      </svg>
      <svg width="20" height="12" viewBox="0 0 20 12" fill="none" stroke="#fff" strokeWidth="1.800" className="mr-[33px]"><path d="M1 11l9-9 9 9" /></svg>
      <svg width="22" height="24" viewBox="0 0 22 24" fill="none" stroke="#fff" strokeWidth="1.500" className="mr-[29px]">
        <path d="M6 18L14 3q2-2 4 0 1 2 0 3L10 19l-4 3zM9 10q-5 0-3 4-5 1-4 5 2 4 6 1M17 9q4 0 3 3-3 0-4-2l-4 6" />
      </svg>
      <div className="flex flex-col text-[18px] leading-[28px] text-center font-normal">
        <time>19:56</time>
        <time>25/02/2019</time>
      </div>
      <button aria-label="Notifications" className="relative w-[38px] h-[36px] ml-[28px] mr-[17px]">
        <svg width="26" height="28" viewBox="0 0 26 28" className="absolute left-0 top-0">
          <path d="M0 0h24v19H12l-4 6v-6H0z" fill="#fff" />
          <path d="M4 5h16M4 9h16M4 13h10" stroke="#213a4e" strokeWidth="1.500" />
        </svg>
        <span className="absolute left-[9px] top-[10px] w-[27px] h-[26px] rounded-full border border-[#5d91c0] bg-[#0d4f8c] text-[16px] leading-[24px] text-center font-semibold">19</span>
      </button>
      <span className="h-[60px] w-[7px] border-l-2 border-[#7a8c99]" />
    </div>
  </footer>
);

const TABS = [
  { name: 'Tableau de bord', className: 'w-[156px] h-[31px] pl-[9px] pt-px border-r-transparent' },
  { name: 'Oscilloscope', className: 'w-[128px] h-[34px] pl-[10px] border-r-[#808080]' },
  { name: 'Table', className: 'w-[77px] h-[31px] pl-[9px] pt-px border-l-transparent border-r-[#808080]' },
];

export default function App() {
  const [tab, setTab] = useState('Oscilloscope');

  return (
    <div className="min-h-screen flex flex-col bg-[#dcdcdc] font-['Noto_Sans',sans-serif] text-[#161616]">
      <Defs />

      <div className="bg-[#f0f0f0] border-t-2 border-[#2c6bb0]">
        <div className="flex">
          {/* Module selection */}
          <nav className="w-[92px] pl-[2px] pt-px shrink-0">
            {SIDEBAR.map((item) => <SidebarButton key={item.label} {...item} />)}
          </nav>

          <main className="flex-1 min-w-0">
            <div role="tablist" className="flex items-end h-[40px] pl-[17px] mb-[10px]">
              {TABS.map((item) => (
                <button
                  key={item.name}
                  role="tab"
                  aria-selected={tab === item.name}
                  onClick={() => setTab(item.name)}
                  className={clsx('border-t-2 border-l-2 border-r-2 border-t-white border-l-white rounded-t-[3px] text-left text-[18px] leading-[24px] whitespace-nowrap', item.className)}
                >
                  {item.name}
                </button>
              ))}
            </div>

            <div className="pl-[25px] pr-[18px]">
              <Scope />
            </div>

            {/* Time scroll */}
            <div className="flex items-center pl-[13px] pr-[6px] mt-[12px]">
              <ScrollButton label="Reculer"><path d="M17 1v10L7 6z" /></ScrollButton>
              <ScrollButton label="Début"><path d="M11 1v10L0 6zM22 1v10L11 6z" /></ScrollButton>
              <input
                type="range"
                aria-label="Position"
                min="0"
                max="100"
                defaultValue="100"
                className="appearance-none flex-1 min-w-0 h-[30px] mr-[3px] bg-[#fafafa] border-2 border-t-[#7c7c7c] border-l-[#7c7c7c] border-r-[#8c8c8c] border-b-white [&::-webkit-slider-thumb]:appearance-none [&::-webkit-slider-thumb]:w-[28px] [&::-webkit-slider-thumb]:h-[24px] [&::-webkit-slider-thumb]:border-2 [&::-webkit-slider-thumb]:border-t-[#e8e8e8] [&::-webkit-slider-thumb]:border-l-[#e8e8e8] [&::-webkit-slider-thumb]:border-r-[#999] [&::-webkit-slider-thumb]:border-b-[#999] [&::-webkit-slider-thumb]:bg-[linear-gradient(90deg,#f0f0f0_12px,#a0a0a0_12px,#a0a0a0_13px,#f0f0f0_13px)]"
              />
              <ScrollButton label="Fin"><path d="M0 1v10l11-5zM11 1v10l11-5z" /></ScrollButton>
              <ScrollButton label="Avancer"><path d="M6 1v10l10-5z" /></ScrollButton>
            </div>

            <Toolbar />
          </main>
        </div>

        {/* Connection status */}
        <div className="flex gap-[7px] pl-[5px] pr-[6px] mt-[9px] pb-[3px] text-[18px] leading-[26px]">
          <div className="w-[237px] h-[30px] flex items-center border-2 border-t-[#b0b0b0] border-l-[#b0b0b0] border-r-white border-b-white">
            <span className="w-[98px]">Interface:</span>
            <Led />
            <span className="w-[94px] ml-[7px]">Véhicule:</span>
            <Led />
          </div>
          <div className="flex-1 h-[30px] flex items-center pl-[2px] border-2 border-t-[#b0b0b0] border-l-[#b0b0b0] border-r-white border-b-white">Pas connecté</div>
        </div>
      </div>

      {/* Document behind the window */}
      <div className="flex-1 min-h-[33px] flex bg-linear-to-b from-[#acacac] via-[#d2d2d2] via-40% to-[#dedede]">
        <button aria-label="Défiler vers le bas" className="w-[25px] ml-auto flex items-end justify-center pb-[8px] bg-linear-to-b from-[#c4c4c4] via-[#ececec] via-40% to-[#f2f2f2]">
          <svg width="12" height="7" viewBox="0 0 12 7"><path d="M0 0h12L6 7z" fill="#505050" /></svg>
        </button>
      </div>

      <Taskbar />
    </div>
  );
}
